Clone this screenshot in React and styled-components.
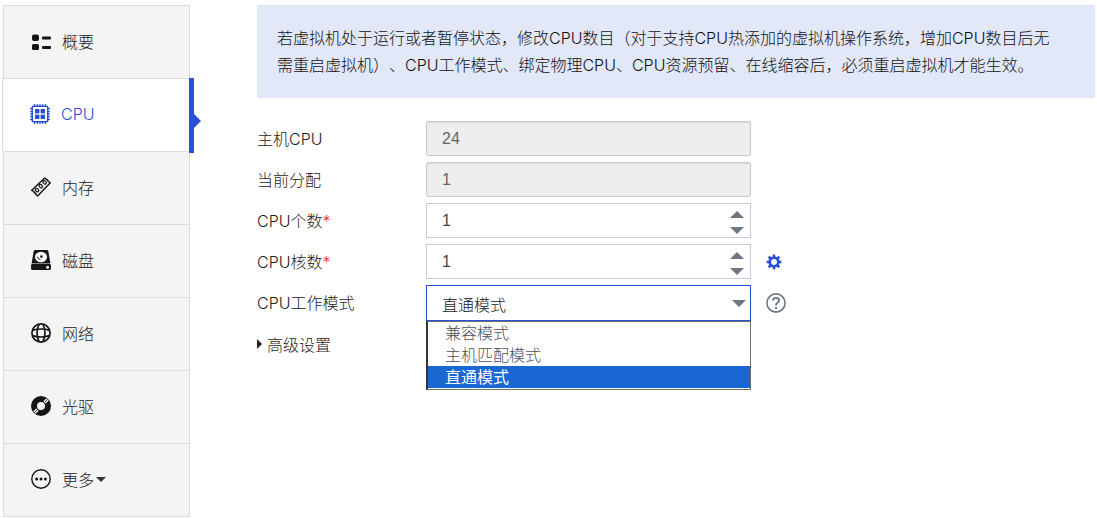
import React, { useState } from "react";
import styled, { createGlobalStyle, css } from "styled-components";

const GlobalStyle = createGlobalStyle`
  * {
    box-sizing: border-box;
  }

  body {
    margin: 0;
    background: #fff;
    color: #222;
    font-family: Inter, "Noto Sans CJK SC", sans-serif;
    font-size: 16px;
    font-weight: 300;
    text-spacing-trim: space-all;
  }

  button, input, select {
    font: inherit;
    color: inherit;
  }
`;

const Page = styled.div`
  display: flex;
  align-items: flex-start;
  gap: 67px;
  padding: 5px 2px 2px 3px;
`;

/* Sidebar */
const SideNav = styled.nav`
  flex: 0 0 187px;
`;

const NavList = styled.ul`
  list-style: none;
  margin: 0;
  padding: 0;
  border-bottom: 1px solid #dcdcdc;
`;

const NavLink = styled.a`
  display: flex;
  align-items: center;
  gap: 11px;
  height: 73px;
  padding: 0 0 2px 27px;
  border: 1px solid #dcdcdc;
  border-bottom: none;
  background: #f4f4f4;
  color: #222;
  text-decoration: none;

  svg {
    flex: none;
    color: #151515;
  }

  ${({ $active }) => $active && css`
    position: relative;
    margin-left: -1px;
    background: #fff;
    color: #2a50d8;

    svg {
      color: #2a50d8;
    }

    /* bar and arrow on the right edge */
    &::before {
      content: "";
      position: absolute;
      z-index: 1;
      top: -1px;
      right: -5px;
      width: 5px;
      height: 75px;
      background: #2a50d8;
    }

    &::after {
      content: "";
      position: absolute;
      z-index: 1;
      top: 35px;
      right: -12px;
      border: 7px solid transparent;
      border-left-color: #2a50d8;
      border-right: none;
    }
  `}
`;

const NavLabel = styled.span`
  display: flex;
  align-items: center;
  gap: 2px;
`;

/* Content */
const Content = styled.main`
  flex: 1;
  min-width: 0;
`;

const Notice = styled.p`
  margin: 0 0 23px;
  padding: 20px 36px 19px 20px;
  background: #e2e8f8;
  color: #111;
  line-height: 27px;
`;

const Form = styled.form`
  display: flex;
  flex-direction: column;
  gap: 6px;
`;

const Row = styled.div`
  display: flex;
  align-items: center;
  min-height: 35px;
`;

const Label = styled.label`
  flex: 0 0 169px;
  padding-bottom: 2px;
`;

const Required = styled.span`
  color: #f03030;
`;

const Field = styled.div`
  position: relative;
  flex: 0 1 325px;
  min-width: 0;
`;

const control = css`
  display: block;
  width: 100%;
  height: 35px;
  margin: 0;
  padding: 0 15px;
  border: 1px solid #c9c8da;
  border-radius: 0;
  outline: none;
  background: #fff;
  color: #444;
  font-family: "Liberation Sans", "Noto Sans CJK SC", sans-serif;
`;

const TextInput = styled.input`
  ${control}

  &:disabled {
    border-radius: 2px;
    background: #eee;
    color: #666;
    box-shadow: inset 0 1px 1px rgba(0, 0, 0, 0.08);
  }
`;

const NumberInput = styled.input`
  ${control}
  appearance: textfield;

  &::-webkit-inner-spin-button,
  &::-webkit-outer-spin-button {
    appearance: none;
    margin: 0;
  }
`;

const Spinner = styled.div`
  position: absolute;
  top: 3px;
  right: 4px;
  bottom: 0;
  display: flex;
  flex-direction: column;
`;

const SpinButton = styled.button`
  flex: 1;
  display: flex;
  align-items: center;
  justify-content: center;
  width: 20px;
  padding: 0;
  border: none;
  background: none;
  cursor: pointer;
`;

const Triangle = styled.span`
  border: 7px solid transparent;

  ${({ $dir }) => $dir === "up" && css`
    border-top: none;
    border-bottom-color: #6c7783;
  `}

  ${({ $dir }) => $dir === "down" && css`
    border-bottom: none;
    border-top-color: #6c7783;
  `}
`;

const Caret = styled.span`
  border: 5px solid transparent;
  border-top-color: #333;
  border-bottom: none;
`;

const Select = styled.select`
  ${control}
  appearance: none;
  height: 36px;
  padding: 4px 15px 0;
  border-color: #2a50d8;
  color: #222;
`;

const SelectArrow = styled(Triangle)`
  position: absolute;
  top: 15px;
  right: 5px;
  pointer-events: none;
`;

const Menu = styled.ul`
  position: absolute;
  z-index: 2;
  top: 100%;
  left: 0;
  right: 0;
  margin: 0;
  padding: 0 0 1px;
  list-style: none;
  border: 1px solid #6f6f6f;
  border-left: 2px solid #333;
  background: #fff;
`;

const MenuItem = styled.li`
  padding: 1px 0 1px 17px;
  line-height: 20px;
  color: #4c4f5c;
  cursor: default;

  ${({ $selected }) => $selected && css`
    background: #1967d2;
    color: #fff;
    font-weight: 400;
  `}
`;

const IconButton = styled.button`
  display: flex;
  margin-left: 15px;
  padding: 0;
  border: none;
  background: none;
  color: ${({ $color }) => $color};
  cursor: pointer;
`;

const AdvancedToggle = styled.button`
  display: flex;
  align-items: center;
  gap: 5px;
  padding: 0 0 2px;
  border: none;
  background: none;
  cursor: pointer;

  &::before {
    content: "";
    border: 5px solid transparent;
    border-left-color: #222;
    border-right: none;
  }
`;

/* Icons */
const OverviewIcon = () => (
  <svg width="20" height="20" viewBox="0 0 20 20" fill="currentColor">
    <rect x="1" y="3.5" width="7" height="6.5" rx="2" />
    <rect x="1" y="13" width="7" height="6" rx="1.5" />
    <rect x="11" y="5.5" width="9" height="3" rx="1" />
    <rect x="11" y="15" width="9" height="3" rx="1" />
  </svg>
);

const CpuIcon = () => (
  <svg width="20" height="20" viewBox="0 0 20 20" fill="currentColor">
    <rect x="2.2" y="2.2" width="15.6" height="15.6" rx="1.5" fill="none" stroke="currentColor" strokeWidth="1.6" />
    <path d="M4.5 0v2M7.25 0v2M10 0v2M12.75 0v2M15.5 0v2M4.5 18v2M7.25 18v2M10 18v2M12.75 18v2M15.5 18v2M0 4.5h2M0 7.25h2M0 10h2M0 12.75h2M0 15.5h2M18 4.5h2M18 7.25h2M18 10h2M18 12.75h2M18 15.5h2" stroke="currentColor" strokeWidth="1.2" />
    <rect x="5" y="5" width="4.4" height="4.4" />
    <rect x="10.6" y="5" width="4.4" height="4.4" />
    <rect x="5" y="10.6" width="4.4" height="4.4" />
    <rect x="10.6" y="10.6" width="4.4" height="4.4" />
  </svg>
);

const MemoryIcon = () => (
  <svg width="20" height="20" viewBox="0 0 20 20" fill="none" stroke="currentColor" strokeWidth="1.4" strokeLinejoin="round">
    <path d="M13.8.9L15.4 2.6L16.6 2.8L17 4.2L19.3 5.8L6.6 19.1L4.9 17.6L4.8 16.2L3.2 15.8L3 14.6L.7 13.3Z" />
    <ellipse cx="13.6" cy="5.4" rx="1.4" ry="2" transform="rotate(-45 13.6 5.4)" strokeWidth="1.2" />
    <ellipse cx="9.8" cy="9.2" rx="1.4" ry="2" transform="rotate(-45 9.8 9.2)" strokeWidth="1.2" />
    <ellipse cx="6" cy="13" rx="1.4" ry="2" transform="rotate(-45 6 13)" strokeWidth="1.2" />
  </svg>
);

const DiskIcon = () => (
  <svg width="20" height="20" viewBox="0 0 20 20">
    <path fill="currentColor" d="M4.3 0h11.4q1.4 0 1.7 1.4L19.4 13.4H.6L2.6 1.4Q2.9 0 4.3 0z" />
    <rect x="0" y="14" width="20" height="6" rx="1.4" fill="currentColor" />
    <ellipse cx="10" cy="7" rx="6" ry="5.3" fill="#fff" />
    <circle cx="10.4" cy="6.6" r="1.3" fill="currentColor" />
    <path d="M6.4 6.6a3.6 3.6 0 0 0 3 3" fill="none" stroke="currentColor" strokeWidth="1" />
    <circle cx="16.6" cy="17.2" r="1.5" fill="#fff" />
  </svg>
);

const GlobeIcon = () => (
  <svg width="20" height="20" viewBox="0 0 20 20" fill="none" stroke="currentColor" strokeWidth="1.7">
    <circle cx="10" cy="10" r="9.1" />
    <path d="M8.2 1Q3.8 10 8.2 19M11.8 1Q16.2 10 11.8 19" />
    <path d="M1.4 7.4Q10 4.6 18.6 7.4M1.4 12.6Q10 15.4 18.6 12.6" />
  </svg>
);

const DiscIcon = () => (
  <svg width="20" height="20" viewBox="0 0 20 20">
    <circle cx="10" cy="10" r="7" fill="none" stroke="currentColor" strokeWidth="6" />
    <path d="M13.6 6.4L16.4 3.6M3.6 16.4L6.4 13.6" stroke="#f4f4f4" strokeWidth="3.4" />
    <path d="M14.2 5.8L15.8 4.2M4.2 15.8L5.8 14.2" stroke="currentColor" strokeWidth="1" />
  </svg>
);

const MoreIcon = () => (
  <svg width="20" height="20" viewBox="0 0 20 20" fill="currentColor">
    <circle cx="10" cy="10" r="9.2" fill="none" stroke="currentColor" strokeWidth="1.4" />
    <circle cx="5.6" cy="10" r="1.5" />
    <circle cx="10" cy="10" r="1.5" />
    <circle cx="14.4" cy="10" r="1.5" />
  </svg>
);

const GearIcon = () => (
  <svg width="16" height="16" viewBox="0 0 16 16" fill="none" stroke="currentColor">
    <circle cx="8" cy="8" r="4.3" strokeWidth="2.8" />
    <path d="M8 .6v3M8 12.4v3M.6 8h3M12.4 8h3M2.6 2.6l2 2M11.4 11.4l2 2M2.6 13.4l2-2M11.4 4.6l2-2" strokeWidth="2.4" />
  </svg>
);

const HelpIcon = () => (
  <svg width="20" height="20" viewBox="0 0 20 20" fill="none" stroke="currentColor">
    <circle cx="10" cy="10" r="9.1" strokeWidth="1.6" />
    <path d="M6.9 7.6Q7 4.8 10 4.8T13.1 7.4Q13.1 8.8 11.5 9.8T10 12.6" strokeWidth="1.8" />
    <path d="M10 14v2" strokeWidth="2" />
  </svg>
);

const navItems = [
  { key: "summary", label: "概要", Icon: OverviewIcon },
  { key: "cpu", label: "CPU", Icon: CpuIcon },
  { key: "memory", label: "内存", Icon: MemoryIcon },
  { key: "disk", label: "磁盘", Icon: DiskIcon },
  { key: "network", label: "网络", Icon: GlobeIcon },
  { key: "cdrom", label: "光驱", Icon: DiscIcon },
  { key: "more", label: "更多", Icon: MoreIcon, caret: true },
];

const modes = ["兼容模式", "主机匹配模式", "直通模式"];

function NumberField({ id, value, onChange }) {
  return (
    <Field>
      <NumberInput id={id} type="number" min="1" value={value} onChange={(e) => onChange(Number(e.target.value))} />
      <Spinner>
        <SpinButton type="button" aria-label="+" onClick={() => onChange(value + 1)}>
          <Triangle $dir="up" />
        </SpinButton>
        <SpinButton type="button" aria-label="-" onClick={() => onChange(Math.max(1, value - 1))}>
          <Triangle $dir="down" />
        </SpinButton>
      </Spinner>
    </Field>
  );
}

export default function App() {
  const [active, setActive] = useState("cpu");
  const [sockets, setSockets] = useState(1);
  const [cores, setCores] = useState(1);
  const [mode, setMode] = useState("直通模式");
  const [menuOpen, setMenuOpen] = useState(true);

  const pickMode = (item) => {
    setMode(item);
    setMenuOpen(false);
  };

  return (
    <>
      <GlobalStyle />
      <Page>
        <SideNav>
          <NavList>
            {navItems.map(({ key, label, Icon, caret }) => (
              <li key={key}>
                <NavLink href={`#${key}`} $active={active === key} onClick={() => setActive(key)}>
                  <Icon />
                  <NavLabel>
                    {label}
                    {caret && <Caret />}
                  </NavLabel>
                </NavLink>
              </li>
            ))}
          </NavList>
        </SideNav>

        <Content>
          <Notice>
            若虚拟机处于运行或者暂停状态，修改CPU数目（对于支持CPU热添加的虚拟机操作系统，增加CPU数目后无需重启虚拟机）、CPU工作模式、绑定物理CPU、CPU资源预留、在线缩容后，必须重启虚拟机才能生效。
          </Notice>

          <Form onSubmit={(e) => e.preventDefault()}>
            <Row>
              <Label htmlFor="hostCpu">主机CPU</Label>
              <Field>
                <TextInput id="hostCpu" type="text" value="24" disabled />
              </Field>
            </Row>

            <Row>
              <Label htmlFor="allocated">当前分配</Label>
              <Field>
                <TextInput id="allocated" type="text" value="1" disabled />
              </Field>
            </Row>

            <Row>
              <Label htmlFor="sockets">CPU个数<Required>*</Required></Label>
              <NumberField id="sockets" value={sockets} onChange={setSockets} />
            </Row>

            <Row>
              <Label htmlFor="cores">CPU核数<Required>*</Required></Label>
              <NumberField id="cores" value={cores} onChange={setCores} />
              <IconButton type="button" $color="#2a50d8">
                <GearIcon />
              </IconButton>
            </Row>

            <Row>
              <Label htmlFor="mode">CPU工作模式</Label>
              <Field>
                <Select id="mode" value={mode} onChange={(e) => pickMode(e.target.value)}>
                  {modes.map((item) => <option key={item}>{item}</option>)}
                </Select>
                <SelectArrow $dir="down" />
                {menuOpen && (
                  <Menu role="listbox">
                    {modes.map((item) => (
                      <MenuItem key={item} role="option" aria-selected={item === mode} $selected={item === mode} onClick={() => pickMode(item)}>
                        {item}
                      </MenuItem>
                    ))}
                  </Menu>
                )}
              </Field>
              <IconButton type="button" $color="#6c7783">
                <HelpIcon />
              </IconButton>
            </Row>

            <Row>
              <AdvancedToggle type="button">高级设置</AdvancedToggle>
            </Row>
          </Form>
        </Content>
      </Page>
    </>
  );
}
